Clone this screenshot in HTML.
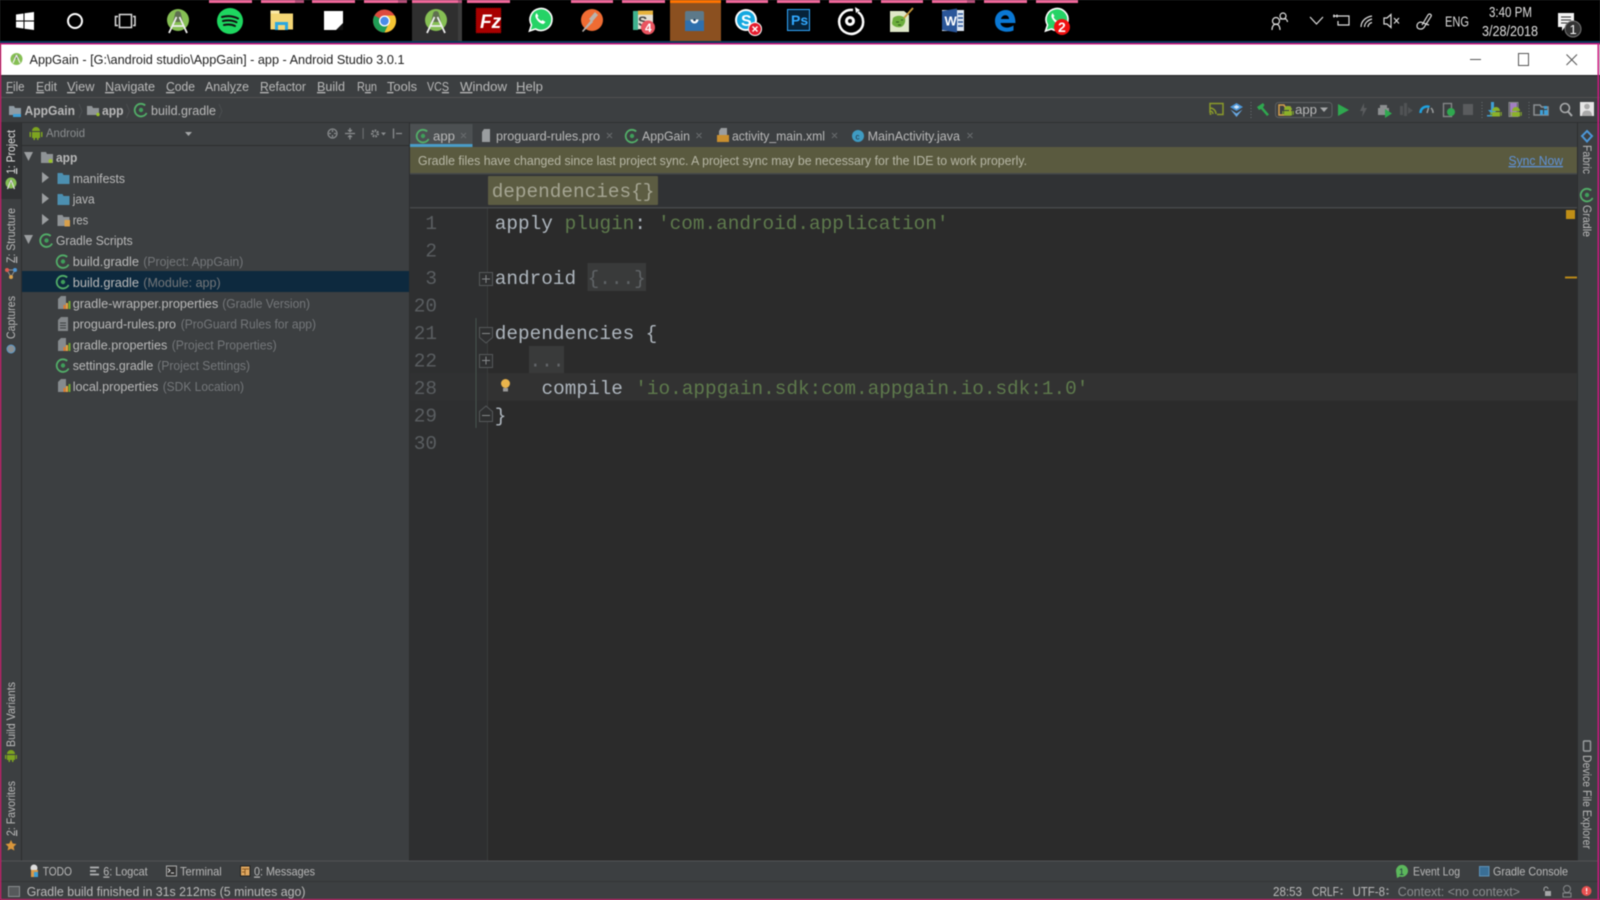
<!DOCTYPE html>
<html><head><meta charset="utf-8"><title>AppGain - Android Studio</title>
<style>
html,body{margin:0;padding:0;background:#3c3f41;width:1600px;height:900px;overflow:hidden}
svg{display:block;position:absolute;left:0;top:0;filter:blur(.4px)}
text{font-family:"Liberation Sans",sans-serif;font-size:13px;fill:#b9b9b9}
.m{font-family:"Liberation Mono",monospace;font-size:19.38px;fill:#aeb6be}
.s{fill:#5e7a4c}
.n{fill:#5a5e61;text-anchor:end}
.d{fill:#74777a}
</style></head><body>
<svg width="1600" height="900" viewBox="0 0 1600 900" xmlns="http://www.w3.org/2000/svg">
<defs>
<g id="gr"><path d="M4.200-4.600A6.300 6.300 0 1 0 5.600 3" fill="none" stroke="#52ae68" stroke-width="1.800"/><circle r="2.200" fill="#3f9e5a"/></g>
<g id="pr"><path d="M-6-4l3-3h5v13h-8z" fill="#868b8e"/><rect x="-.5" y="2" width="2" height="4" fill="#e2792b"/><rect x="2" y="0" width="2" height="6" fill="#e8a33a"/><rect x="4.500" y="-2" width="2" height="8" fill="#6fa832"/></g>
<g id="as"><circle cy="-1" r="11" fill="#86bf54"/><path d="M-3-7a3 3 0 0 1 6 0l2 8h-10z" fill="#5f7050"/><path d="M-1.500-4L-9 12M1.500-4L9 12M-6 5H6" stroke="#eeeeee" stroke-width="1.800" fill="none"/></g>
<g id="wa"><path d="M-10.500 11l2-6a11 11 0 1 1 4 4z" fill="#25d366" stroke="#fff" stroke-width="1.600"/><path d="M-4.500-5c-1 3 4 9 8 9l2-2-3-2-1 1c-2-1-3-2-4-4l1-1-2-3z" fill="#fff"/></g>
<g id="an"><path d="M-4-1a4 4 0 0 1 8 0zM-4 0h8v4.500h-8zM-5.700 0h1v3.800h-1zM4.700 0h1v3.800h-1z" fill="#8bb22a"/></g>
</defs>

<!-- taskbar -->
<rect width="1600" height="43" fill="#000"/>
<rect x="412" width="50" height="41" fill="#2f2f2f"/>
<rect x="458" width="4" height="41" fill="#3d3d3d"/>
<rect x="670" width="51" height="41" fill="#8b5020"/>
<rect y="41" width="1600" height="2" fill="#0b3658"/>
<g fill="#f0679a">
<rect x="209" width="43" height="3"/><rect x="261" width="43" height="3"/><rect x="312" width="43" height="3"/><rect x="364" width="43" height="3"/><rect x="412" width="50" height="3"/><rect x="467" width="43" height="3"/><rect x="571" width="42" height="3"/><rect x="622" width="43" height="3"/><rect x="726" width="42" height="3"/><rect x="777" width="43" height="3"/><rect x="829" width="43" height="3"/><rect x="881" width="42" height="3"/><rect x="932" width="43" height="3"/><rect x="984" width="43" height="3"/><rect x="1036" width="42" height="3"/>
</g>
<g fill="#b44e78"><rect x="295" width="9" height="3"/><rect x="398" width="9" height="3"/><rect x="458" width="4" height="3"/><rect x="967" width="8" height="3"/></g>
<rect x="670" width="51" height="3" fill="#ff7300"/>
<!-- windows -->
<path d="M16 14.500l7.500-1v7H16zM24.500 13.300L34 12v8.500h-9.500zM16 21.500h7.500v7l-7.500-1zM24.500 21.500H34V30l-9.500-1.300z" fill="#fff"/>
<circle cx="75" cy="21" r="7" fill="none" stroke="#fff" stroke-width="2"/>
<g fill="none" stroke="#ddd" stroke-width="1.500"><rect x="119.500" y="14.500" width="12" height="13"/><path d="M118 16.500h-2.500v9h2.500M133 16.500h2v9h-2"/></g>
<use href="#as" x="178" y="21"/>
<circle cx="230" cy="21" r="13" fill="#1ed760"/>
<path d="M222 17c5-1.500 11-1 16 1.500M223 21c4.500-1 9.500-.8 13.500 1.300M224 25c4-.8 8-.6 11 1" fill="none" stroke="#111" stroke-width="2" stroke-linecap="round"/>
<path d="M270.500 10.500h7l2 3h13.500v16h-22.500z" fill="#f4d675"/><rect x="270.500" y="10.500" width="9" height="3" fill="#fbe9a8"/>
<path d="M275 30v-8h13v8h-3v-5h-7v5z" fill="#2aa7e0"/><rect x="278" y="25" width="7" height="5" fill="#f4d675"/>
<rect x="324" y="11" width="19" height="19" fill="#fff"/><path d="M343 23l-7 7h7z" fill="#111"/>
<circle cx="384.500" cy="21" r="11.500" fill="#dd4b3e"/>
<path d="M384.500 21L374.500 15.500A11.500 11.500 0 0 0 384.500 32.500L390 21z" fill="#1f9d55"/>
<path d="M384.500 15.500h10.200A11.500 11.500 0 0 1 384.500 32.500L390 21z" fill="#f5c533"/>
<circle cx="384.500" cy="21" r="5.500" fill="#fff"/><circle cx="384.500" cy="21" r="4.200" fill="#4a8ce8"/>
<use href="#as" x="436" y="21"/>
<rect x="476" y="8" width="25" height="25" fill="#a80000" stroke="#7a0000" stroke-dasharray="1 1"/>
<text x="480" y="28" style="font-size:19px;font-weight:bold;font-style:italic;fill:#fff">Fz</text>
<use href="#wa" x="540" y="20"/>
<circle cx="592" cy="20" r="11" fill="#ef6c33"/><path d="M582 31l9-11 2 2-10 10zM589 19l6-7 3 3-6 7z" fill="#b9b4ae"/>
<path d="M633 11l20-.5v18l-20 1z" fill="#e4e0d4"/><path d="M633 11h5v19h-5z" fill="#3fb28f"/><path d="M638 10.700h15v4h-15z" fill="#e8b33c"/>
<text x="638" y="26" style="font-size:14px;font-weight:bold;fill:#444">S</text>
<circle cx="648" cy="27.500" r="7" fill="#ea5460"/><text x="645" y="32" style="font-size:12px;font-weight:bold;fill:#fff">4</text>
<rect x="685" y="11" width="19" height="20" rx="2" fill="#5d7989"/><rect x="685" y="20.500" width="19" height="10.500" fill="#2f70ad"/>
<path d="M690.500 19.500a4 4 0 0 0 8 0z" fill="#fff"/><circle cx="694.500" cy="20" r="1.300" fill="#24425f"/>
<circle cx="746" cy="20" r="11" fill="#fff"/><circle cx="746" cy="20" r="9" fill="#14a8e0"/>
<text x="741" y="26" style="font-size:16px;font-weight:bold;fill:#fff">S</text>
<circle cx="755" cy="29" r="6.500" fill="#e51c2e" stroke="#fff" stroke-width="1"/><path d="M752.500 26.500l5 5m0-5l-5 5" stroke="#fff" stroke-width="1.500"/>
<rect x="787.500" y="9.500" width="22" height="21" fill="#06233a" stroke="#31a8ff"/>
<text x="791" y="25" style="font-size:14px;font-weight:bold;fill:#31a8ff">Ps</text>
<path d="M858 12a12 12 0 1 1-5-2" fill="none" stroke="#fff" stroke-width="2.500"/><circle cx="850" cy="21" r="5" fill="#fff"/><circle cx="850" cy="21" r="2" fill="#000"/><path d="M855 7l5 3-4 3z" fill="#fff"/>
<path d="M890 11h14l5 4v17h-19z" fill="#dfe8c8"/><path d="M893 18c3-3 9-3 12 0 1 4-1 8-4 9-4 1-9-1-9-4z" fill="#6cae3c"/><path d="M896 22h3M901 20h2M898 25h3" stroke="#2d5c1a"/><path d="M904 18l9-10" stroke="#c79a3c" stroke-width="1.800"/>
<rect x="942" y="10" width="22" height="21" fill="#dde7f4"/><path d="M942 11l15-2.500v24l-15-2.500z" fill="#2a5699"/>
<text x="944.500" y="25.500" style="font-size:13px;font-weight:bold;fill:#fff">W</text>
<path d="M958 14h5M958 18h5M958 22h5M958 26h5" stroke="#2a5699" stroke-width="1.500"/>
<path d="M995 21c0-7 5-11 11-11 6 0 9.500 5 9.500 13h-15c.5 5 8 6 13 2.500v5c-7 3-18.500 1-18.500-9.500zm6-2h8c0-5-7-5-8 0z" fill="#0a78d4"/>
<use href="#wa" x="1056" y="20"/>
<circle cx="1062" cy="27" r="8" fill="#f01010"/><text x="1058" y="32" style="font-size:14px;font-weight:bold;fill:#fff">2</text>
<!-- tray -->
<g fill="none" stroke="#ddd" stroke-width="1.200">
<circle cx="1276" cy="21" r="3.500"/><path d="M1272 30c0-4 2-6 4-6s4 2 4 6"/><circle cx="1283" cy="16" r="3"/><path d="M1280 19h6c1 1 1.500 2 1.500 3"/>
<path d="M1310 17l6.500 7 6.500-7"/>
<path d="M1336 16h13v9h-11v-4M1333 16h5M1334 14.500v3M1337 14.500v3"/>
<path d="M1361 27c0-6 5-10 11-11M1364.500 27c0-4 3.500-7 7.500-8M1368 27c0-2 1.500-4 4-4.500"/>
<path d="M1384 18v6h3l4 3.500v-13l-4 3.500zM1394 18l5 5.500m0-5.500l-5 5.500"/>
<path d="M1422 25l6-10c1.500-2 4-.5 3 1.500l-7 11c-2 2.500-7 2-7-1.500 0-3 3-5 6-3l6 2"/>
</g>
<text x="1445" y="26.500" textLength="24" lengthAdjust="spacingAndGlyphs" style="font-size:15px;fill:#ddd">ENG</text>
<text x="1489" y="17" textLength="43" lengthAdjust="spacingAndGlyphs" style="font-size:14.500px;fill:#ddd">3:40 PM</text>
<text x="1482" y="36" textLength="56" lengthAdjust="spacingAndGlyphs" style="font-size:14.500px;fill:#ddd">3/28/2018</text>
<path d="M1558 13h16v14h-9l-3 4v-4h-4z" fill="#f3f3f3"/><path d="M1561 17h10M1561 20h10M1561 23h7" stroke="#333"/>
<circle cx="1573" cy="29" r="8" fill="#333" stroke="#777"/><text x="1569.500" y="34" style="font-size:13px;fill:#fff">1</text>

<!-- title bar -->
<rect y="43" width="1600" height="32" fill="#fff"/>
<rect y="43" width="1600" height="1.500" fill="#c9177e"/>
<circle cx="16.500" cy="59" r="6" fill="#86bf54"/><circle cx="16.500" cy="57" r="2" fill="#5f7050"/><path d="M16.500 55l-3.500 8M16.500 55l3.500 8" stroke="#eee" stroke-width="1.200"/>
<text x="29.500" y="64" textLength="375" lengthAdjust="spacingAndGlyphs" style="fill:#1e1e1e">AppGain - [G:\android studio\AppGain] - app - Android Studio 3.0.1</text>
<g fill="none" stroke="#555"><path d="M1470 59.500h11"/><rect x="1518.500" y="53.500" width="10" height="12"/><path d="M1566.500 54.500l10.500 10.500m0-10.500l-10.500 10.500"/></g>
<rect y="75" width="1600" height="1" fill="#1f2122"/>

<!-- menu -->
<rect y="76" width="1600" height="21" fill="#3c3f41"/>
<rect y="97" width="1600" height="1" fill="#515151"/>
<g>
<text x="6" y="91" textLength="18.500" lengthAdjust="spacingAndGlyphs"><tspan text-decoration="underline">F</tspan>ile</text>
<text x="36" y="91" textLength="21" lengthAdjust="spacingAndGlyphs"><tspan text-decoration="underline">E</tspan>dit</text>
<text x="67" y="91" textLength="27.500" lengthAdjust="spacingAndGlyphs"><tspan text-decoration="underline">V</tspan>iew</text>
<text x="105" y="91" textLength="50" lengthAdjust="spacingAndGlyphs"><tspan text-decoration="underline">N</tspan>avigate</text>
<text x="166" y="91" textLength="29" lengthAdjust="spacingAndGlyphs"><tspan text-decoration="underline">C</tspan>ode</text>
<text x="205" y="91" textLength="44" lengthAdjust="spacingAndGlyphs">Anal<tspan text-decoration="underline">y</tspan>ze</text>
<text x="260" y="91" textLength="46" lengthAdjust="spacingAndGlyphs"><tspan text-decoration="underline">R</tspan>efactor</text>
<text x="317" y="91" textLength="28" lengthAdjust="spacingAndGlyphs"><tspan text-decoration="underline">B</tspan>uild</text>
<text x="357" y="91" textLength="20" lengthAdjust="spacingAndGlyphs">R<tspan text-decoration="underline">u</tspan>n</text>
<text x="387" y="91" textLength="30" lengthAdjust="spacingAndGlyphs"><tspan text-decoration="underline">T</tspan>ools</text>
<text x="427" y="91" textLength="22" lengthAdjust="spacingAndGlyphs">VC<tspan text-decoration="underline">S</tspan></text>
<text x="460" y="91" textLength="47" lengthAdjust="spacingAndGlyphs"><tspan text-decoration="underline">W</tspan>indow</text>
<text x="516" y="91" textLength="27" lengthAdjust="spacingAndGlyphs"><tspan text-decoration="underline">H</tspan>elp</text>
</g>

<!-- nav bar -->
<rect y="98" width="1600" height="24" fill="#3c3f41"/>
<rect y="122" width="1600" height="1" fill="#2f3132"/>
<path d="M9 106h5l1 2h6v7H9z" fill="#8f9ba3"/><rect x="13" y="114" width="8" height="3" fill="#3e9fd6"/>
<text x="24.500" y="115" textLength="50.500" lengthAdjust="spacingAndGlyphs" style="font-weight:bold">AppGain</text>
<path d="M79 104l3 7-3 7M126.500 104l3 7-3 7M219 104l3 7-3 7" fill="none" stroke="#4a4d4f"/>
<path d="M87 106h5l1 2h6v7H87z" fill="#8f9396"/><circle cx="98" cy="114.500" r="1.700" fill="#9ac32a"/>
<text x="102" y="115" textLength="21.500" lengthAdjust="spacingAndGlyphs" style="font-weight:bold">app</text>
<use href="#gr" x="141" y="110"/>
<text x="151" y="115" textLength="65" lengthAdjust="spacingAndGlyphs">build.gradle</text>

<!-- toolbar icons -->
<path d="M1210 113v-9.500h13v11h-6M1210 108a6 6 0 0 1 6 6M1210 111a3 3 0 0 1 3 3" fill="none" stroke="#8a9a2a" stroke-width="1.500"/><circle cx="1210.500" cy="114" r="1" fill="#8a9a2a"/>
<path d="M1236.500 103l6.500 4-6.500 4-6.500-4z" fill="#4c96d7"/><path d="M1230.500 109.500l6 7.500 6-7.500-6 4z" fill="#68a8e2"/><path d="M1236.500 105l3 2-3 2-3-2z" fill="#cfe3f5"/>
<path d="M1251 102v16M1482 102v16M1529 102v16" stroke="#6a6d6f" stroke-dasharray="1 2"/>
<path d="M1257 107l6-4 1.500 2-1.500 2.500 6 7-2 1.500-6-7-2 1z" fill="#2fa84f"/>
<rect x="1275.500" y="102.500" width="56.500" height="15" rx="3" fill="#3c3f41" stroke="#5c5f61"/>
<path d="M1279 105h5l1 2h5v8h-11z" fill="none" stroke="#d8a04c" stroke-width="1.500"/><use href="#an" x="1288" y="111"/>
<text x="1295" y="114" textLength="22" lengthAdjust="spacingAndGlyphs">app</text>
<path d="M1320 107.500h8l-4 4.500z" fill="#a5a7a8"/>
<path d="M1338 104l11 6-11 6z" fill="#2fa84f"/>
<path d="M1364 103l-4 8h3l-1 6 5-9h-3z" fill="#5a5c5e"/>
<path d="M1378 108h11v7h-11z M1380 105h7v3h-7z" fill="#8c8f90"/><path d="M1385 109l7 4.500-7 4.500z" fill="#2fa84f"/>
<path d="M1400 106h3v9h-3zM1404 103h3v13h-3zM1408 107l5 3.500-5 3.500z" fill="#505355"/>
<path d="M1420.500 113a6.500 6.500 0 0 1 9-6" fill="none" stroke="#1ea2e0" stroke-width="2.500"/><path d="M1431 108a6.500 6.500 0 0 1 2 5M1427 113l1.500-5" fill="none" stroke="#9a9d9e" stroke-width="1.500"/>
<rect x="1443.500" y="103.500" width="8" height="13" fill="none" stroke="#87898a" stroke-width="1.300"/><circle cx="1451" cy="112" r="4" fill="#2fa84f"/>
<rect x="1463" y="104" width="10" height="11" fill="#5a5c5e"/>
<path d="M1491 102h3v8h3l-4.500 5-4.500-5h3z" fill="#3e9fd6"/><rect x="1487" y="115" width="7" height="1.500" fill="#3e9fd6"/><use href="#an" x="1496" y="112"/>
<rect x="1510" y="103" width="7" height="13" fill="#a27fc2"/><rect x="1509" y="102.500" width="9" height="14" fill="none" stroke="#8a8c8d"/><use href="#an" x="1516" y="112"/>
<path d="M1534 105h6l1.500 2h6.500v8h-14z" fill="none" stroke="#8b9094" stroke-width="1.500"/><rect x="1540" y="110" width="3" height="5" fill="#3e9fd6"/><rect x="1544" y="110" width="4" height="5" fill="#3e9fd6"/><rect x="1544" y="106" width="3" height="3" fill="#3e9fd6"/>
<circle cx="1565" cy="108" r="4.500" fill="none" stroke="#a8aaab" stroke-width="1.600"/><path d="M1568 111.500l4 4.500" stroke="#a8aaab" stroke-width="2"/>
<rect x="1580" y="102" width="14" height="14" fill="#e6e6e6"/><circle cx="1587" cy="106.500" r="2.800" fill="#aaa"/><path d="M1582 116c0-4 2-5.500 5-5.500s5 1.500 5 5.500z" fill="#aaa"/>

<!-- left strip -->
<rect x="21" y="123" width="1" height="738" fill="#2c2e2f"/>
<rect x="1" y="123" width="20" height="76" fill="#303234"/>
<text transform="translate(15 174) rotate(-90)" textLength="44" lengthAdjust="spacingAndGlyphs" style="font-size:12px;fill:#e0e0e0"><tspan text-decoration="underline">1</tspan>: Project</text>
<circle cx="11" cy="183" r="5.500" fill="#86bf54"/><circle cx="11" cy="181.500" r="1.800" fill="#5f7050"/><path d="M11 180l-3.500 9M11 180l3.500 9" stroke="#ddd" stroke-width="1.200"/>
<text transform="translate(15 263) rotate(-90)" textLength="55" lengthAdjust="spacingAndGlyphs" style="font-size:12px"><tspan text-decoration="underline">Z</tspan>: Structure</text>
<path d="M7 270l4 7 4-7z" fill="none" stroke="#8c8f90"/><circle cx="7" cy="270" r="2" fill="#e05a4e"/><circle cx="15" cy="270" r="2" fill="#4c96d7"/><circle cx="11" cy="277" r="2" fill="#d8a04c"/>
<text transform="translate(15 339) rotate(-90)" textLength="43" lengthAdjust="spacingAndGlyphs" style="font-size:12px">Captures</text>
<circle cx="11" cy="349" r="4" fill="#8a9093" stroke="#5d9ac9"/>
<text transform="translate(15 747) rotate(-90)" textLength="65" lengthAdjust="spacingAndGlyphs" style="font-size:12px">Build Variants</text>
<path d="M7 754a4 4 0 0 1 8 0zM7 755h8v5H7zM5 755h1.300v4H5zM15.700 755H17v4h-1.300zM8.500 760h1.500v2H8.500zM12 760h1.500v2H12z" fill="#7da420"/>
<text transform="translate(15 836) rotate(-90)" textLength="55" lengthAdjust="spacingAndGlyphs" style="font-size:12px"><tspan text-decoration="underline">2</tspan>: Favorites</text>
<path d="M11 840l1.700 3.500 3.800.5-2.800 2.700.7 3.800-3.400-1.800-3.400 1.800.7-3.800-2.800-2.700 3.800-.5z" fill="#d9963b"/>

<!-- project panel -->
<rect x="22" y="123" width="387" height="23" fill="#3c3f41"/>
<rect x="22" y="145" width="387" height="1" fill="#2c2e2f"/>
<path d="M32 131a4 4 0 0 1 8 0zM32 132h8v6h-8zM29.500 132H31v5h-1.500zM41 132h1.500v5H41zM33.500 138H35v2h-1.500zM37 138h1.500v2H37z" fill="#7da420"/>
<text x="46" y="137" textLength="39" lengthAdjust="spacingAndGlyphs" style="font-size:12px;fill:#8b8e90">Android</text>
<path d="M185 132h7l-3.500 4z" fill="#a5a7a8"/>
<g fill="none" stroke="#8a8d8f" stroke-width="1.300">
<circle cx="332.500" cy="133.500" r="4.500"/><path d="M332.500 130v2M332.500 135v2M329 133.500h2M334 133.500h2M345 133.500h10M350 128v3.500M350 136v3.500M348 130l2 1.500 2-1.500M348 137l2-1.500 2 1.500"/>
<circle cx="375" cy="133.500" r="2.800" stroke-width="2.500" stroke-dasharray="1.500 1"/>
<path d="M393.500 128.500v10M396 133.500h6"/>
</g>
<rect x="362.500" y="128" width="1.200" height="11" fill="#6a6d6f"/>
<path d="M381 132.500h5l-2.500 3z" fill="#8a8d8f"/>

<rect x="22" y="271" width="387" height="21" fill="#0d293e"/>
<path d="M24 152h9l-4.500 9zM24 235h9l-4.500 9z" fill="#9b9ea0"/>
<path d="M42 172l7 5.500-7 5.500zM42 193l7 5.500-7 5.500zM42 214l7 5.500-7 5.500z" fill="#9b9ea0"/>
<path d="M41 152h5l1 2h6v9H41z" fill="#8f9396"/><circle cx="50.500" cy="161" r="2" fill="#9ac32a"/>
<text x="56" y="162" textLength="21.300" lengthAdjust="spacingAndGlyphs" style="font-weight:bold">app</text>
<path d="M57.500 173h5l1 2h6v9h-12z" fill="#4c8fb0"/>
<text x="72.700" y="183" textLength="52.300" lengthAdjust="spacingAndGlyphs">manifests</text>
<path d="M57.500 194h5l1 2h6v9h-12z" fill="#4c8fb0"/>
<text x="72.700" y="203.500" textLength="22" lengthAdjust="spacingAndGlyphs">java</text>
<path d="M57.500 215h5l1 2h6v9h-12z" fill="#8f9396"/><rect x="64.500" y="220" width="5.500" height="6.500" fill="#d8a04c"/>
<text x="72.700" y="224.500" textLength="15.600" lengthAdjust="spacingAndGlyphs">res</text>
<use href="#gr" x="46.500" y="240.500"/>
<text x="56" y="245.200" textLength="76.700" lengthAdjust="spacingAndGlyphs">Gradle Scripts</text>
<use href="#gr" x="63" y="261.500"/>
<text x="72.700" y="266" textLength="66.300" lengthAdjust="spacingAndGlyphs">build.gradle</text>
<text x="143.300" y="266" textLength="100" lengthAdjust="spacingAndGlyphs" class="d">(Project: AppGain)</text>
<use href="#gr" x="63" y="282"/>
<text x="72.700" y="286.800" textLength="66.300" lengthAdjust="spacingAndGlyphs">build.gradle</text>
<text x="143.300" y="286.800" textLength="77.400" lengthAdjust="spacingAndGlyphs" class="d">(Module: app)</text>
<use href="#pr" x="64" y="303"/>
<text x="72.700" y="307.800" textLength="145.600" lengthAdjust="spacingAndGlyphs">gradle-wrapper.properties</text>
<text x="222.300" y="307.800" textLength="87.700" lengthAdjust="spacingAndGlyphs" class="d">(Gradle Version)</text>
<path d="M58 320l3-3h7v14H58z" fill="#83878a"/><path d="M60 323h6M60 325.500h6M60 328h6" stroke="#3c3f41"/>
<text x="72.700" y="328.500" textLength="103.300" lengthAdjust="spacingAndGlyphs">proguard-rules.pro</text>
<text x="180.700" y="328.500" textLength="135.300" lengthAdjust="spacingAndGlyphs" class="d">(ProGuard Rules for app)</text>
<use href="#pr" x="64" y="345"/>
<text x="72.700" y="349.500" textLength="94.600" lengthAdjust="spacingAndGlyphs">gradle.properties</text>
<text x="171.700" y="349.500" textLength="105" lengthAdjust="spacingAndGlyphs" class="d">(Project Properties)</text>
<use href="#gr" x="63" y="365.500"/>
<text x="72.700" y="370.200" textLength="80.600" lengthAdjust="spacingAndGlyphs">settings.gradle</text>
<text x="157.300" y="370.200" textLength="92.700" lengthAdjust="spacingAndGlyphs" class="d">(Project Settings)</text>
<use href="#pr" x="64" y="386"/>
<text x="72.700" y="391.200" textLength="85.600" lengthAdjust="spacingAndGlyphs">local.properties</text>
<text x="162.700" y="391.200" textLength="81.300" lengthAdjust="spacingAndGlyphs" class="d">(SDK Location)</text>
<rect x="409" y="123" width="1" height="738" fill="#2c2e2f"/>

<!-- tabs -->
<rect x="410" y="123" width="1167" height="24" fill="#3c3f41"/>
<rect x="410" y="124" width="62.500" height="20" fill="#4c5052"/>
<rect x="410" y="144" width="62.500" height="3" fill="#4a9cc7"/>
<use href="#gr" x="423" y="136"/>
<text x="433" y="140.500" textLength="22" lengthAdjust="spacingAndGlyphs">app</text>
<path d="M461 133l5 5m0-5l-5 5M607 133l5 5m0-5l-5 5M696.500 133l5 5m0-5l-5 5M832 133l5 5m0-5l-5 5M967.500 133l5 5m0-5l-5 5" stroke="#6a6d6f" fill="none"/>
<path d="M482 132l2-3h6v13h-8z" fill="#9a9d9f"/>
<text x="496" y="140.500" textLength="104" lengthAdjust="spacingAndGlyphs">proguard-rules.pro</text>
<use href="#gr" x="632" y="136"/>
<text x="642" y="140.500" textLength="48" lengthAdjust="spacingAndGlyphs">AppGain</text>
<path d="M719 131l2-3h6v7h-8z" fill="#9a9d9f"/><rect x="717" y="135" width="12" height="7" fill="#c98f2f"/>
<text x="732" y="140.500" textLength="93" lengthAdjust="spacingAndGlyphs">activity_main.xml</text>
<circle cx="858" cy="136" r="6" fill="#3f9bc2"/><text x="855.500" y="139.500" style="font-size:8px;fill:#234">c</text>
<text x="867.600" y="140.500" textLength="92.400" lengthAdjust="spacingAndGlyphs">MainActivity.java</text>

<!-- banner -->
<rect x="410" y="147" width="1167" height="26" fill="#5a5a3f"/>
<text x="418" y="165" textLength="609" lengthAdjust="spacingAndGlyphs" style="fill:#b6b6a4">Gradle files have changed since last project sync. A project sync may be necessary for the IDE to work properly.</text>
<text x="1508.500" y="165" textLength="54.500" lengthAdjust="spacingAndGlyphs" style="fill:#5f92d8" text-decoration="underline">Sync Now</text>

<!-- breadcrumb -->
<rect x="410" y="173" width="1167" height="34" fill="#303234"/>
<rect x="410" y="173" width="1167" height="1.500" fill="#45484a"/>
<rect x="410" y="207" width="1167" height="1.500" fill="#45484a"/>
<rect x="488" y="176" width="170" height="29" rx="1" fill="#5c5c42"/>
<text x="491.700" y="197" class="m" style="fill:#a5a593">dependencies{}</text>

<!-- editor -->
<rect x="410" y="208.500" width="77" height="652.500" fill="#2e2f30"/>
<rect x="487" y="208.500" width="1090" height="652.500" fill="#2b2b2b"/>
<rect x="410" y="373" width="77" height="27.700" fill="#303132"/>
<rect x="487" y="373" width="1090" height="27.700" fill="#323232"/>
<rect x="487" y="208.500" width="1" height="652.500" fill="#3a3c3d"/>
<rect x="587.500" y="263" width="58.500" height="28" fill="#393a3a"/>
<rect x="529" y="346" width="35" height="27" fill="#393a3a"/>
<rect x="475.500" y="318" width="1" height="110" fill="#46544d"/>

<text x="437" y="229" class="m n">1</text>
<text x="437" y="256.500" class="m n">2</text>
<text x="437" y="284" class="m n">3</text>
<text x="437" y="311.500" class="m n">20</text>
<text x="437" y="339" class="m n">21</text>
<text x="437" y="366.500" class="m n">22</text>
<text x="437" y="394" class="m n">28</text>
<text x="437" y="421.500" class="m n">29</text>
<text x="437" y="449" class="m n">30</text>

<text x="494.800" y="229" class="m">apply</text>
<text x="564.600" y="229" class="m s">plugin</text>
<text x="634.400" y="229" class="m">:</text>
<text x="658" y="229" class="m s">'com.android.application'</text>
<text x="494.800" y="284" class="m">android</text>
<text x="587.600" y="284" class="m" style="fill:#5f6366">{...}</text>
<text x="494.800" y="339" class="m">dependencies</text>
<text x="645.600" y="339" class="m">{</text>
<text x="529.500" y="366.500" class="m" style="fill:#63666a">...</text>
<text x="541.500" y="394" class="m">compile</text>
<text x="635.300" y="394" class="m s">'io.appgain.sdk:com.appgain.io.sdk:1.0'</text>
<text x="494.800" y="421.500" class="m">}</text>

<!-- fold markers -->
<g fill="#2e2f30" stroke="#55585a">
<rect x="479.500" y="272.500" width="13" height="13"/>
<rect x="479.500" y="354.500" width="13" height="13"/>
<path d="M479.500 327.500h13v10l-6.500 5.500-6.500-5.500z"/>
<path d="M479.500 421.500h13v-10l-6.500-5.500-6.500 5.500z"/>
</g>
<path d="M482 279h8M486 275v8M482 360.500h8M486 356.500v8M482 333.500h8M482 415.500h8" stroke="#85888a" fill="none"/>
<circle cx="505.500" cy="383.500" r="4.500" fill="#e9b44c"/><rect x="503" y="388" width="5" height="3.500" fill="#9a9a9a"/>

<!-- error stripe -->
<rect x="1566" y="210" width="9" height="9" fill="#c08e16"/>
<rect x="1565" y="276.500" width="12" height="2" fill="#b8881a"/>

<!-- right strip -->
<rect x="1577" y="123" width="20.500" height="738" fill="#3c3f41"/>
<rect x="1577" y="123" width="1" height="738" fill="#2c2e2f"/>
<path d="M1587 131l5 5-5 5.500-5-5.500z" fill="none" stroke="#4c96d7" stroke-width="2"/>
<text transform="translate(1583 145) rotate(90)" textLength="29" lengthAdjust="spacingAndGlyphs" style="font-size:12px">Fabric</text>
<use href="#gr" x="1587" y="195"/>
<text transform="translate(1583 205) rotate(90)" textLength="32" lengthAdjust="spacingAndGlyphs" style="font-size:12px">Gradle</text>
<rect x="1583.500" y="741" width="7" height="10" rx="1" fill="none" stroke="#9a9d9f" stroke-width="1.400"/>
<text transform="translate(1583 755) rotate(90)" textLength="94" lengthAdjust="spacingAndGlyphs" style="font-size:12px">Device File Explorer</text>

<!-- tool window bar -->
<rect x="1" y="861" width="1597" height="20" fill="#3c3f41"/>
<rect x="1" y="860.500" width="1597" height="1" fill="#515355"/>
<rect x="1" y="881" width="1597" height="1" fill="#333536"/>
<circle cx="34" cy="868" r="3.500" fill="#ddd"/><rect x="31" y="870" width="7" height="7" fill="#d89a4a"/><rect x="34" y="872" width="4" height="5" fill="#3e9fd6"/>
<text x="42.700" y="875.500" textLength="29.300" lengthAdjust="spacingAndGlyphs" style="font-size:12px">TODO</text>
<path d="M90 867.500h9M90 871h6M90 874.500h9" stroke="#b0b2b4" stroke-width="1.800"/>
<text x="103.300" y="875.500" textLength="44.400" lengthAdjust="spacingAndGlyphs" style="font-size:12px"><tspan text-decoration="underline">6</tspan>: Logcat</text>
<rect x="166.500" y="866" width="10" height="10" fill="#333" stroke="#aaa"/><path d="M168 868.500l2 2-2 2M171 873h3" stroke="#ddd" fill="none"/>
<text x="180" y="875.500" textLength="41.700" lengthAdjust="spacingAndGlyphs" style="font-size:12px">Terminal</text>
<rect x="240.500" y="866" width="9.500" height="10" fill="#e0a860" stroke="#222"/><path d="M242 869h7M245 869v6M242 872h3" stroke="#8a5a22" fill="none"/>
<text x="254" y="875.500" textLength="61" lengthAdjust="spacingAndGlyphs" style="font-size:12px"><tspan text-decoration="underline">0</tspan>: Messages</text>
<path d="M1396 871a6 6 0 1 1 4 5.500l-3 1.500z" fill="#5cb85c"/><text x="1399" y="875" style="font-size:9px;fill:#234">1</text>
<text x="1413" y="875.500" textLength="47" lengthAdjust="spacingAndGlyphs" style="font-size:12px">Event Log</text>
<rect x="1479.500" y="866.500" width="9.500" height="9.500" fill="#3a6f96" stroke="#5d92b8"/>
<text x="1493" y="875.500" textLength="75" lengthAdjust="spacingAndGlyphs" style="font-size:12px">Gradle Console</text>

<!-- status bar -->
<rect x="1" y="882" width="1597" height="17" fill="#3c3f41"/>
<rect x="8.500" y="886.500" width="11" height="10" fill="#56595b" stroke="#8a8d8f"/>
<text x="26.700" y="896" textLength="278.800" lengthAdjust="spacingAndGlyphs" style="font-size:12.500px">Gradle build finished in 31s 212ms (5 minutes ago)</text>
<text x="1273" y="896" textLength="29" lengthAdjust="spacingAndGlyphs" style="font-size:12.500px">28:53</text>
<text x="1312" y="896" textLength="27" lengthAdjust="spacingAndGlyphs" style="font-size:12.500px">CRLF</text>
<path d="M1340 890l1.500-2 1.500 2zM1340 893l1.500 2 1.500-2zM1386 890l1.500-2 1.500 2zM1386 893l1.500 2 1.500-2z" fill="#a5a7a8"/>
<text x="1352.500" y="896" textLength="32.500" lengthAdjust="spacingAndGlyphs" style="font-size:12.500px">UTF-8</text>
<text x="1397.700" y="896" textLength="122.300" lengthAdjust="spacingAndGlyphs" style="font-size:12.500px;fill:#8a8d8f">Context: &lt;no context&gt;</text>
<rect x="1545" y="891" width="6" height="5" fill="#a5a7a8"/><path d="M1544 891v-2a2 2 0 0 1 4 0" fill="none" stroke="#a5a7a8"/>
<circle cx="1567" cy="889" r="3.500" fill="none" stroke="#85888a"/><path d="M1563 897h8v-4h-8z" fill="none" stroke="#85888a"/>
<circle cx="1586.500" cy="891" r="5" fill="#e85050"/><rect x="1586" y="888" width="1.200" height="3.500" fill="#fff"/><rect x="1586" y="892.500" width="1.200" height="1.300" fill="#fff"/>

<!-- window border -->
<rect x="0" y="43" width="1.200" height="857" fill="#d81b70"/>
<rect x="1597.500" y="43" width="1.500" height="857" fill="#c9177e"/>
<rect x="0" y="899" width="1600" height="1" fill="#d81b70"/>
</svg>
</body></html>
